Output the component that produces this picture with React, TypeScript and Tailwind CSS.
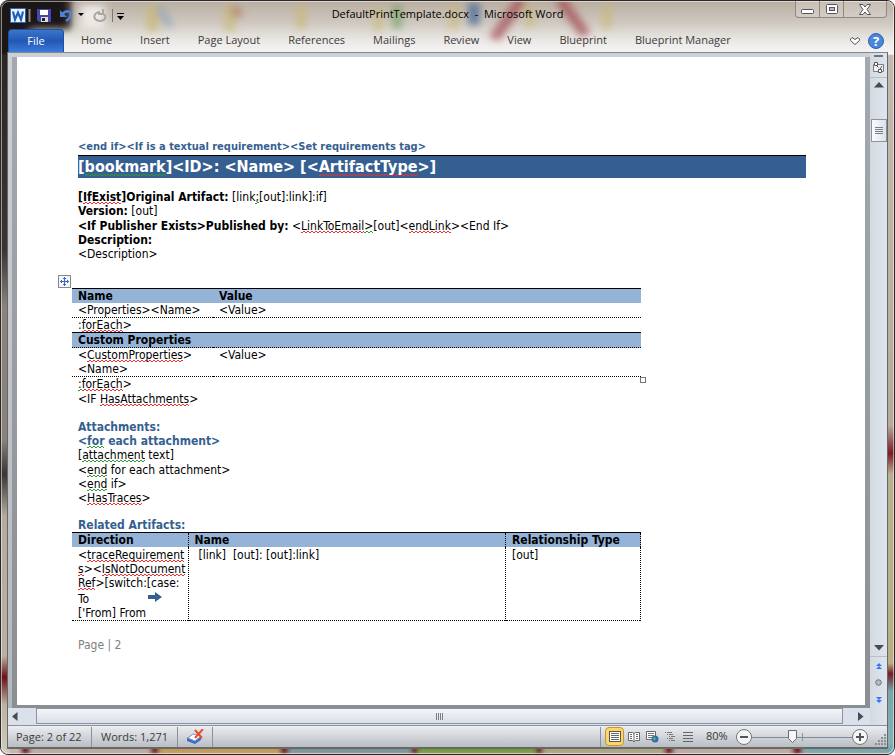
import type { ReactNode } from "react";

const RED =
  "bg-repeat-x bg-[linear-gradient(90deg,#f03030_50%,transparent_50%),linear-gradient(90deg,transparent_50%,#f03030_50%)] bg-[length:4px_1px] [background-position:0_100%,0_calc(100%-1px)]";
const GREEN =
  "bg-repeat-x bg-[linear-gradient(90deg,#2f9a2f_50%,transparent_50%),linear-gradient(90deg,transparent_50%,#2f9a2f_50%)] bg-[length:4px_1px] [background-position:0_100%,0_calc(100%-1px)]";

const Sp = ({ children }: { children: ReactNode }) => <span className={RED}>{children}</span>;
const Gr = ({ children }: { children: ReactNode }) => <span className={GREEN}>{children}</span>;

const TABS = ["Home", "Insert", "Page Layout", "References", "Mailings", "Review", "View", "Blueprint", "Blueprint Manager"];

/* Desktop picture seen through the glass frame */
function Wallpaper() {
  return (
    <svg className="absolute inset-0 h-full w-full" preserveAspectRatio="none" viewBox="0 0 895 755" aria-hidden="true">
      <defs>
        <filter id="soft" x="-30%" y="-30%" width="160%" height="160%">
          <feGaussianBlur stdDeviation="4" />
        </filter>
        <filter id="edge" x="-10%" y="-100%" width="120%" height="300%">
          <feGaussianBlur stdDeviation="2" />
        </filter>
        <linearGradient id="top" x1="0" x2="0" y1="0" y2="1">
          <stop offset="0" stopColor="#b9aea1" />
          <stop offset="0.4" stopColor="#cfc8c0" />
          <stop offset="0.75" stopColor="#eceae7" />
          <stop offset="1" stopColor="#f8f7f6" />
        </linearGradient>
        <linearGradient id="left" x1="0" x2="0" y1="0" y2="1">
          <stop offset="0" stopColor="#2b2727" />
          <stop offset="0.28" stopColor="#3a3534" />
          <stop offset="0.36" stopColor="#8b837b" />
          <stop offset="0.55" stopColor="#8b837b" />
          <stop offset="0.6" stopColor="#3a3534" />
          <stop offset="0.66" stopColor="#b5aca0" />
          <stop offset="0.86" stopColor="#b9b0a4" />
          <stop offset="0.89" stopColor="#6d1016" />
          <stop offset="0.93" stopColor="#bdb3a4" />
          <stop offset="1" stopColor="#cfc8bd" />
        </linearGradient>
        <linearGradient id="right" x1="0" x2="0" y1="0" y2="1">
          <stop offset="0" stopColor="#c3bab0" />
          <stop offset="0.53" stopColor="#b5aa9c" />
          <stop offset="0.57" stopColor="#7c1a22" />
          <stop offset="0.6" stopColor="#b8b092" />
          <stop offset="0.87" stopColor="#b8b083" />
          <stop offset="0.885" stopColor="#741c24" />
          <stop offset="0.91" stopColor="#77a5aa" />
          <stop offset="1" stopColor="#8bb3b8" />
        </linearGradient>
      </defs>
      <rect width="895" height="755" fill="#c2b8ac" />
      <rect width="895" height="54" fill="url(#top)" />
      <g filter="url(#soft)">
        <path d="M-20-20H70V28H30L20 60H-20Z" fill="#1c1919" />
        <path d="M80 4h24v24H80z" fill="#eeeae6" />
        <g opacity="0.75">
          <path d="M146 4h12v26h-12zM224 4h10v26h-10zM296 4h9v24h-9zM374 6h8v24h-8zM450 4h8v24h-8zM526 4h8v22h-8zM603 2h8v26h-8z" fill="#c8b875" />
          <path d="M158 6l12 20" stroke="#7f9dbd" strokeWidth="6" />
          <path d="M233 6l6 10" stroke="#b06b5c" strokeWidth="7" />
          <path d="M397 4v24" stroke="#6b9c56" strokeWidth="8" />
          <path d="M474 2v22" stroke="#2f5790" strokeWidth="10" />
          <path d="M522-2L494 38M560-2l26 36" stroke="#a1464e" strokeWidth="10" />
        </g>
      </g>
      <rect y="54" width="9" height="701" fill="url(#left)" />
      <rect x="886" y="54" width="9" height="701" fill="url(#right)" />
      <g filter="url(#edge)">
        <path d="M28 746h125v9H28zM674 746h119v9H674z" fill="#b9aba2" />
        <path d="M157 746h125v9H157z" fill="#c09a58" />
        <path d="M288 746h124v9H288z" fill="#75949b" />
        <path d="M418 746h118v9H418z" fill="#6f9a3c" />
        <path d="M542 746h123v9H542z" fill="#a9a582" />
        <path d="M804 746h91v9h-91z" fill="#76a6ad" />
        <path d="M21 746h8v9h-8zM150 746h8v9h-8zM280 746h8v9h-8zM411 746h7v9h-7zM536 746h7v9h-7zM665 746h9v9h-9zM793 746h10v9h-10z" fill="#701820" />
      </g>
    </svg>
  );
}

function TitleBar() {
  return (
    <header className="flex h-7 shrink-0 items-start">
      <div className="flex h-7 w-[130px] items-center pl-0.5">
        <svg width="126" height="18" viewBox="0 0 126 18" aria-hidden="true">
          <rect x="0.5" y="2.5" width="15" height="14" fill="#eaf3fd" stroke="#2a67b5" />
          <path d="M3 5.500l2 8 3-7 3 7 2-8" fill="none" stroke="#2160b8" strokeWidth="2.200" />
          <path d="M19.500 3v13" stroke="#8d8a88" strokeWidth="2" />
          <path d="M27 3h14v13H29l-2-2z" fill="#4547ad" />
          <path d="M30 4h8v5h-8z" fill="#fff" />
          <path d="M31 11h7v5h-7z" fill="#ddd" />
          <path d="M32 12h3v3h-3z" fill="#222" />
          <path d="M52 9c4-6 11-4 8 2-1 2-2 3-4 4" fill="none" stroke="#4a83d9" strokeWidth="2.400" />
          <path d="M50 4v7h7z" fill="#4a83d9" />
          <path d="M68 7h6l-3 3z" fill="#000" />
          <path d="M93 3v5h-5M90 6c-7 0-8 9 0 9 6 0 7-6 3-7" fill="none" stroke="#aaa6a3" strokeWidth="2" />
          <path d="M102.500 3v13" stroke="#777" />
          <path d="M107 7h7v1h-7zM107 10h7l-3.500 4z" fill="#000" />
        </svg>
      </div>
      <h1 className="flex-1 pt-[5px] text-center text-[11px] leading-4 whitespace-pre text-black">DefaultPrintTemplate.docx  -  Microsoft Word</h1>
      <div className="flex w-[130px] justify-end">
        <div className="flex h-[17px] w-[92px] divide-x divide-[#8f8883] rounded-b border border-t-0 border-[#8f8883] bg-white/20">
          <button aria-label="Minimize" className="flex flex-1 items-center justify-center">
            <svg width="13" height="12"><rect x="0.500" y="6.500" width="12" height="4" rx="1" fill="#fff" stroke="#55525e" /></svg>
          </button>
          <button aria-label="Maximize" className="flex flex-1 items-center justify-center">
            <svg width="12" height="10"><rect x="0.500" y="0.500" width="11" height="9" rx="1" fill="#fff" stroke="#55525e" /><rect x="3.500" y="3.500" width="5" height="3" fill="#bbb" stroke="#55525e" /></svg>
          </button>
          <button aria-label="Close" className="flex w-[42px] items-center justify-center">
            <svg width="12" height="11" viewBox="0 0 12 11"><path d="M.5.5h3.500L6 3 8 .5h3.500L8 5.500l3.500 5H8L6 8l-2 2.500H.5L4 5.500z" fill="#fff" stroke="#55525e" /></svg>
          </button>
        </div>
      </div>
    </header>
  );
}

function Ribbon() {
  return (
    <nav className="flex h-[23px] shrink-0 items-stretch text-[11px] text-[#3b3b3b]">
      <button className="mr-[3px] w-14 rounded-t border border-b-0 border-[#1d4fa3] bg-linear-to-b from-[#3a76cc] via-[#2257b4] to-[#3c7ddb] text-white">File</button>
      {TABS.map((t) => (
        <button key={t} className="px-[14px] whitespace-nowrap">{t}</button>
      ))}
      <div className="ml-auto flex items-center gap-2 pr-[3px]">
        <button aria-label="Minimize the Ribbon">
          <svg width="10" height="8" viewBox="0 0 10 8"><path d="M.5 2L2 .5 5 2.500 8 .5 9.500 2v1.500L5 7.500.5 3.500z" fill="#fff" stroke="#55525e" /></svg>
        </button>
        <button aria-label="Help" className="h-4 w-4 rounded-full border border-[#2c62b4] bg-[#4a86dc] text-[13px] leading-[14px] font-bold text-white">?</button>
      </div>
    </nav>
  );
}

function Doc() {
  return (
    <article className="min-h-full flex-1 bg-white pt-[82px] pl-[61px] text-[12px] leading-[14px] text-black">
      <p className="text-[11px] leading-4 font-bold text-[#365f91]">&lt;end if&gt;&lt;If is a textual requirement&gt;&lt;Set requirements tag&gt;</p>
      <h2 className="mr-[59px] h-[23px] border-t border-black bg-[#365f91] text-[16px] leading-[22px] font-bold text-white">
        [<Gr>bookmark</Gr>]&lt;ID&gt;: &lt;Name&gt; [&lt;<Sp>ArtifactType</Sp>&gt;]
      </h2>
      <div className="pt-3">
        <p><b>[<Sp>IfExist</Sp>]Original Artifact:</b> [link<Gr>;</Gr>[out]:link]:if]</p>
        <p><b>Version:</b> [out]</p>
        <p className="mt-px"><b>&lt;If Publisher Exists&gt;Published by:</b> &lt;<Sp>LinkToEmail</Sp><Gr>&gt;</Gr>[out]&lt;<Sp>endLink</Sp>&gt;&lt;End If&gt;</p>
        <p><b>Description:</b></p>
        <p>&lt;Description&gt;</p>
      </div>
      <div className="relative mt-[27px] -ml-1.5 w-[569px]">
        <svg className="absolute -top-[13px] -left-[14px]" width="13" height="13"><rect x="0.500" y="0.500" width="12" height="12" fill="#f4f6fa" stroke="#888" /><path d="M6.500 2v9M2 6.500h9M5 3.500h3M5 9.500h3M3.500 5v3M9.500 5v3" stroke="#3a66c4" /></svg>
        <span className="absolute -right-[5px] -bottom-[6px] h-1.5 w-1.5 border border-[#777] bg-white" />
        <table className="w-full border-collapse text-left align-top">
          <tbody>
            <tr className="border-t border-black bg-[#95b3d7]"><th className="w-[141px] p-0 pl-1.5">Name</th><th className="p-0 pl-1.5">Value</th></tr>
            <tr className="border-b border-dotted border-black"><td className="p-0 pl-1.5">&lt;Properties&gt;&lt;Name&gt;</td><td className="p-0 pl-1.5">&lt;Value&gt;</td></tr>
            <tr><td className="p-0 pl-1.5" colSpan={2}>:<Sp>forEach</Sp>&gt;</td></tr>
            <tr className="border-t border-b border-t-black border-b-black bg-[#95b3d7] [border-bottom-style:dotted]"><th className="p-0 pl-1.5" colSpan={2}>Custom Properties</th></tr>
            <tr className="border-b border-dotted border-black align-top"><td className="p-0 pl-1.5">&lt;<Sp>CustomProperties</Sp>&gt;<br />&lt;Name&gt;</td><td className="p-0 pl-1.5">&lt;Value&gt;</td></tr>
          </tbody>
        </table>
      </div>
      <p><Gr>:</Gr><Sp>forEach</Sp>&gt;</p>
      <p className="mt-px">&lt;IF <Sp>HasAttachments</Sp>&gt;</p>
      <h3 className="mt-3.5 font-bold text-[#365f91]">Attachments:</h3>
      <h3 className="font-bold text-[#365f91]">&lt;<Gr>for</Gr> each attachment&gt;</h3>
      <p>[<Gr>attachment</Gr> text]</p>
      <p className="mt-px">&lt;<Gr>end</Gr> for each attachment&gt;</p>
      <p>&lt;<Gr>end</Gr> if&gt;</p>
      <p>&lt;<Sp>HasTraces</Sp>&gt;</p>
      <h3 className="mt-[13px] font-bold text-[#365f91]">Related Artifacts:</h3>
      <table className="-ml-1.5 w-[569px] table-fixed border-collapse border-b border-dotted border-black text-left">
        <thead>
          <tr className="border-t border-black bg-[#95b3d7]">
            <th className="w-[116px] border-r border-dotted border-black p-0 pl-1.5">Direction</th>
            <th className="border-r border-dotted border-black p-0 pl-1.5">Name</th>
            <th className="w-[135px] border-r border-dotted border-black p-0 pl-1.5">Relationship Type</th>
          </tr>
        </thead>
        <tbody>
          <tr className="align-top">
            <td className="border-r border-dotted border-black p-0 pt-px pl-1.5 whitespace-nowrap">
              &lt;<Sp>traceRequirement</Sp><br /><Sp>s</Sp>&gt;&lt;<Sp>IsNotDocument</Sp><br /><Sp>Ref</Sp>&gt;[switch:[case:
              <div className="flex pt-0.5">
                <span className="w-[70px]">To</span>
                <svg width="14" height="12"><path d="M0 3h7V0l7 5-7 5V7H0z" fill="#365f91" /></svg>
              </div>
              [&apos;From] From
            </td>
            <td className="border-r border-dotted border-black p-0 pt-px pl-2.5 whitespace-pre">[link]  [out]: [out]:link]</td>
            <td className="border-r border-dotted border-black p-0 pt-px pl-1.5">[out]</td>
          </tr>
        </tbody>
      </table>
      <footer className="pt-[17px] text-[#7f7f7f]">Page | 2</footer>
    </article>
  );
}

function VerticalScroll() {
  return (
    <aside className="flex w-[17px] shrink-0 flex-col items-center bg-linear-to-r from-[#d3dae0] to-[#dfe5ee]">
      <span className="mt-[2px] h-0.5 w-[9px] bg-[#71767d]" />
      <button aria-label="Ruler" className="flex h-[21px] w-full items-center justify-center border-b border-[#b7bfc8]">
        <svg width="13" height="13"><path d="M1.500 3.500h10v7h-10z" fill="#f4f1f4" stroke="#777d86" /><path d="M2.500 1.500h3v3h-3zM6.500 8.500h3v3h-3z" fill="#fff" stroke="#555" /><path d="M5 5l1.500 1.500M8 8l2-3" stroke="#555" /></svg>
      </button>
      <button aria-label="Scroll up" className="flex h-[14px] items-center"><svg width="10" height="6"><path d="M0 5.500L5 0l5 5.500z" fill="#484b50" /></svg></button>
      <button aria-label="Vertical position" className="mt-[27px] flex h-[23px] w-4 items-center justify-center border border-[#8b95a2] bg-linear-to-r from-[#fafbfd] to-[#dce2ea]">
        <svg width="8" height="8"><path d="M0 .5h8M0 2.500h8M0 4.500h8M0 6.500h8" stroke="#7b8088" /></svg>
      </button>
      <button aria-label="Scroll down" className="mt-auto flex h-[17px] w-full items-center justify-center border-b border-[#b7bfc8]"><svg width="10" height="6"><path d="M0 0h10L5 5.500z" fill="#484b50" /></svg></button>
      <button aria-label="Previous page" className="flex h-[18px] items-center"><svg width="6" height="7"><path d="M0 3h6L3 0zM0 6h6L3 3z" fill="#3477f0" /></svg></button>
      <button aria-label="Select browse object" className="flex h-[14px] items-center"><svg width="7" height="7"><circle cx="3.500" cy="3.500" r="2.800" fill="#bbb" stroke="#70757b" /></svg></button>
      <button aria-label="Next page" className="flex h-9 items-start pt-2"><svg width="6" height="7"><path d="M0 0h6L3 3zM0 3h6L3 6z" fill="#3477f0" /></svg></button>
    </aside>
  );
}

function HorizontalScroll() {
  return (
    <div className="flex h-[17px] shrink-0 bg-[#dbe1ea] pb-px">
      <button aria-label="Scroll left" className="flex w-7 items-center pl-1"><svg width="6" height="9"><path d="M5.500 0v9L0 4.500z" fill="#484b50" /></svg></button>
      <button aria-label="Horizontal position" className="flex flex-1 items-center justify-center border border-[#8b95a2] bg-linear-to-b from-[#f3f5f9] to-[#d9dfe7]">
        <svg width="8" height="7"><path d="M.5 0v7M2.500 0v7M4.500 0v7M6.500 0v7" stroke="#7b8088" /></svg>
      </button>
      <button aria-label="Scroll right" className="flex w-[27px] items-center justify-end pr-1.5"><svg width="6" height="9"><path d="M0 0v9l5.500-4.500z" fill="#484b50" /></svg></button>
    </div>
  );
}

function StatusBar() {
  return (
    <footer className="flex h-[22px] shrink-0 items-center border-t border-[#8b929c] bg-linear-to-b from-[#eceef0] to-[#b9bec5] text-[11px] text-[#3b3b3b]">
      <span className="w-[84px] border-r border-[#8b9098] pl-2 leading-5 whitespace-nowrap">Page: 2 of 22</span>
      <span className="w-[86px] border-r border-[#8b9098] pl-[9px] leading-5 whitespace-nowrap">Words: 1,271</span>
      <button aria-label="Proofing errors" className="flex h-5 w-[35px] items-center justify-center border-r border-[#8b9098]">
        <svg width="18" height="16" viewBox="0 0 18 16"><path d="M1 9l6-4 8 2v4l-6 4-8-3z" fill="#3d6bc8" /><path d="M2 9l5-4 8 2-6 5z" fill="#fff" stroke="#8b9cbb" /><path d="M9 1l7 8M17 0L9 9" stroke="#f04a2c" strokeWidth="2" /></svg>
      </button>
      <div className="ml-auto flex h-5 items-center border-l border-[#8b9098] pl-1">
        <button aria-label="Print Layout" className="flex h-[19px] w-[19px] items-center justify-center rounded-sm border border-[#c69432] bg-[#fbd66b]">
          <svg width="12" height="11"><rect x="0.500" y="0.500" width="11" height="10" fill="#fff" stroke="#555" /><path d="M2 2.500h8M2 4.500h8M2 6.500h8M2 8.500h8" stroke="#666" /></svg>
        </button>
        <button aria-label="Full Screen Reading" className="w-[18px] pl-1"><svg width="12" height="12"><path d="M.5 1.500h4l1.500 1 1.500-1h4v8h-4L6 11 4.500 9.500h-4zM6 2v9" fill="#fff" stroke="#666" /><path d="M2 3.500h2M2 5.500h2M2 7.500h2M8 3.500h2M8 5.500h2M8 7.500h2" stroke="#666" /></svg></button>
        <button aria-label="Web Layout" className="w-[19px] pl-1"><svg width="13" height="12"><path d="M.5.5h9v8h-9z" fill="#fff" stroke="#666" /><path d="M2 2.500h6M2 4.500h6M2 6.500h6" stroke="#777" /><circle cx="9" cy="8" r="3.500" fill="#2f6fae" /><path d="M7 7l2-1 1 2-2 2z" fill="#5fb05b" /></svg></button>
        <button aria-label="Outline" className="w-[18px] pl-1"><svg width="10" height="10"><path d="M0 .5h7M2 2.500h6M4 4.500h6M2 6.500h6M4 8.500h6" stroke="#777" strokeDasharray="1 1 8" /></svg></button>
        <button aria-label="Draft" className="w-[22px] pl-1"><svg width="10" height="10"><path d="M0 .5h10M0 3.500h10M0 6.500h10M0 9.500h10" stroke="#666" /></svg></button>
        <span className="w-[35px] pl-[5px]">80%</span>
        <button aria-label="Zoom out" className="flex h-4 w-4 items-center justify-center rounded-full border border-[#777] bg-[#f4f5f7]"><span className="h-0.5 w-2 bg-[#555]" /></button>
        <label className="relative h-4 w-[100px]">
          <svg width="100" height="16" aria-hidden="true"><path d="M0 8.500h100" stroke="#7f8a97" /><path d="M50.500 4v8" stroke="#8b929c" /><path d="M36.500 1.500h8v8l-4 4-4-4z" fill="#f6f7f9" stroke="#666b75" /></svg>
          <input type="range" aria-label="Zoom" min={10} max={200} defaultValue={80} className="absolute inset-0 w-full opacity-0" />
        </label>
        <button aria-label="Zoom in" className="flex h-4 w-4 items-center justify-center rounded-full border border-[#777] bg-[#f4f5f7]"><svg width="8" height="8"><path d="M4 0v8M0 4h8" stroke="#555" strokeWidth="2" /></svg></button>
        <svg className="ml-[5px] self-end" width="14" height="13"><path d="M11 1h2M8 4h2M11 4h2M5 7h2M8 7h2M11 7h2M2 10h2M5 10h2M8 10h2M11 10h2" stroke="#8a919b" strokeWidth="2" /></svg>
      </div>
    </footer>
  );
}

export default function App() {
  return (
    <main className="relative flex h-screen flex-col overflow-hidden rounded-lg border border-[#2c2827] bg-[#c2b8ac] px-[7px] pb-[7px] font-['Open_Sans',sans-serif]">
      <Wallpaper />
      <div className="pointer-events-none absolute inset-0 rounded-lg border border-white/50" />
      <div className="relative flex min-h-0 flex-1 flex-col">
        <TitleBar />
        <Ribbon />
        <div className="flex min-h-0 flex-1 flex-col border-t border-[#7d8797] bg-[#c9cdd3] shadow-[0_1px_0_1px_#6b6763]">
          <div className="flex min-h-0 flex-1">
            <div className="flex min-w-0 flex-1 flex-col">
              <div className="flex min-h-0 flex-1 bg-linear-to-b from-[#cdd1d6] to-[#b3b8bd] pt-1 pl-1 font-['DejaVu_Sans_Condensed','DejaVu_Sans',sans-serif]">
                <div className="flex min-h-0 flex-1 bg-linear-to-b from-[#a4a9b1] to-[#8b8f94] px-[5px] pb-[3px]">
                  <Doc />
                </div>
              </div>
              <HorizontalScroll />
            </div>
            <VerticalScroll />
          </div>
          <StatusBar />
        </div>
      </div>
    </main>
  );
}
